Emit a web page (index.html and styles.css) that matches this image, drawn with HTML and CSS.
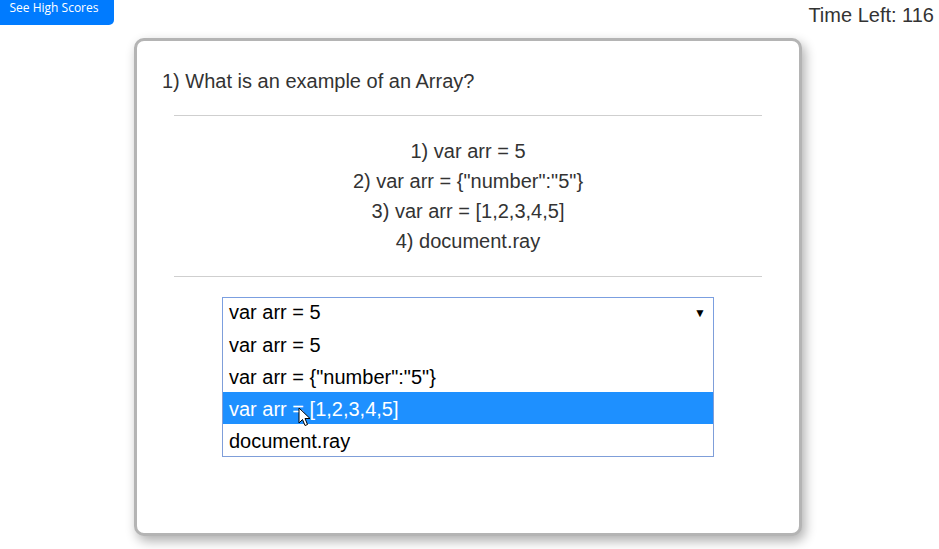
FILE: index.html
```html
<!DOCTYPE html>
<html>
<head>
<meta charset="utf-8">
<link rel="stylesheet" href="styles.css">
</head>
<body>
<header class="topbar">
  <button class="scores-btn">See High Scores</button>
  <div class="timer">Time Left: 116</div>
</header>
<main class="card">
  <h2 class="question">1) What is an example of an Array?</h2>
  <div class="body">
    <hr class="rule">
    <ol class="choices">
      <li>1) var arr = 5</li>
      <li>2) var arr = {"number":"5"}</li>
      <li>3) var arr = [1,2,3,4,5]</li>
      <li>4) document.ray</li>
    </ol>
    <hr class="rule">
    <div class="select-wrap">
      <div class="select">
        <span>var arr = 5</span>
        <span class="caret">&#9660;</span>
      </div>
      <ul class="dropdown">
        <li class="opt">var arr = 5</li>
        <li class="opt">var arr = {"number":"5"}</li>
        <li class="opt active">var arr = [1,2,3,4,5]
          <svg class="cursor" width="14" height="20" viewBox="0 0 14 20"><path d="M1 1 L1 16 L4.5 12.5 L7 18.5 L9.5 17.5 L7 11.5 L12 11.5 Z" fill="#fff" stroke="#000" stroke-width="1" stroke-linejoin="round"/></svg>
        </li>
        <li class="opt">document.ray</li>
      </ul>
    </div>
  </div>
</main>
</body>
</html>
```
FILE: styles.css
```css
* { box-sizing: border-box; }
html, body { margin: 0; padding: 0; background: #fff; }
body {
  font-family: "Liberation Sans", Arial, Helvetica, sans-serif;
  color: #333;
  width: 939px;
  height: 549px;
  overflow: hidden;
}
.topbar {
  display: flex;
  justify-content: space-between;
  align-items: flex-start;
  height: 25px;
}
.scores-btn {
  width: 114px;
  height: 25px;
  border: 0;
  background: #007bff;
  color: #fff;
  font-family: "Open Sans", "Noto Sans", sans-serif;
  font-size: 12px;
  line-height: 14px;
  padding: 0 6px 10px 0;
  margin: 0;
  text-align: center;
  border-radius: 0 0 5px 0;
}
.timer {
  font-size: 20px;
  line-height: 24px;
  padding: 3px 5px 0 0;
  color: #333;
}
.card {
  width: 668px;
  height: 498px;
  margin: 13px 0 0 134px;
  border: 3px solid #b4b4b4;
  border-radius: 10px;
  box-shadow: 3px 5px 12px rgba(0, 0, 0, 0.32);
  padding: 28px 25px 0;
  background: #fff;
}
.question {
  margin: 0;
  font-size: 20px;
  font-weight: normal;
  line-height: 24px;
  color: #333;
}
.body {
  padding: 0 12px;
}
.rule {
  border: 0;
  border-top: 1px solid #cfcfcf;
  margin: 22px 0 20px;
  height: 0;
}
.choices + .rule { margin-top: 20px; }
.choices {
  list-style: none;
  margin: 0;
  padding: 0;
  text-align: center;
  font-size: 20px;
  line-height: 30px;
}
.select-wrap {
  position: relative;
  width: 492px;
  margin: 0 auto;
}
.select {
  display: flex;
  justify-content: space-between;
  align-items: center;
  height: 32px;
  border: 1px solid #7b9fe0;
  padding: 0 7px 1px 6px;
  font-size: 20px;
  color: #000;
}
.caret {
  font-size: 12px;
  color: #000;
}
.dropdown {
  position: absolute;
  left: 0;
  top: 31px;
  width: 492px;
  margin: 0;
  padding: 0;
  list-style: none;
  border: 1px solid #7f9ed9;
  border-top: 0;
  background: #fff;
}
.opt {
  position: relative;
  height: 32px;
  line-height: 34px;
  padding-left: 6px;
  font-size: 20px;
  color: #000;
}
.opt.active {
  background: #1e90ff;
  color: #fff;
}
.cursor {
  position: absolute;
  left: 75px;
  top: 15px;
}
```
